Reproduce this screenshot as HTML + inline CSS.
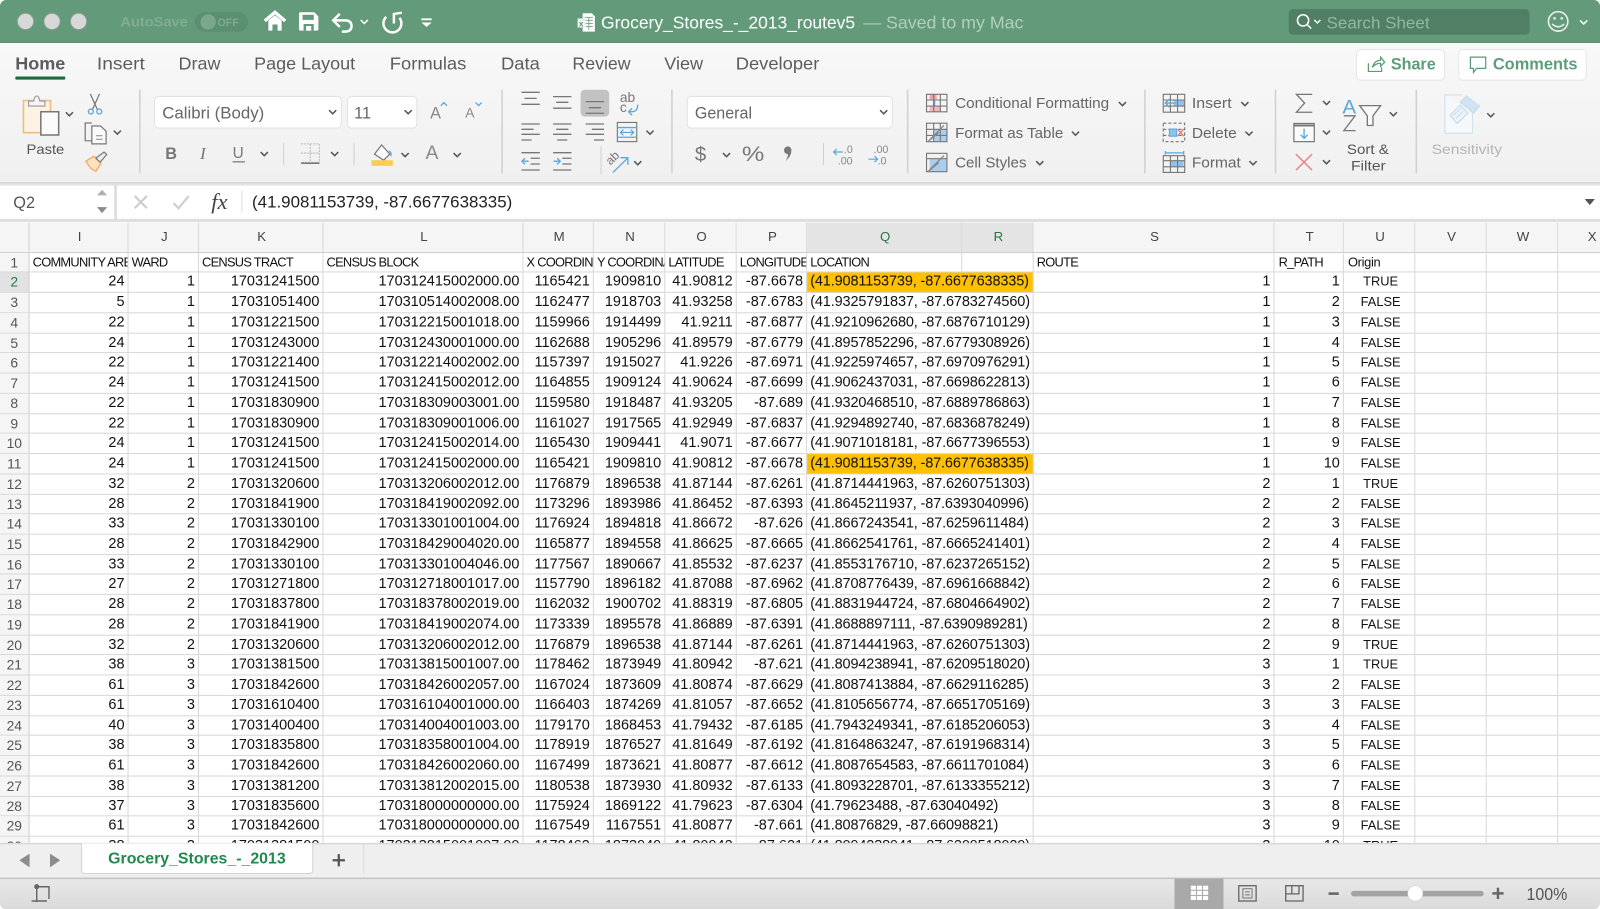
<!DOCTYPE html>
<html><head><meta charset="utf-8"><title>Grocery_Stores_-_2013_routev5</title>
<style>
html,body{margin:0;padding:0;background:#fff;width:1600px;height:909px;overflow:hidden}
#app{position:absolute;left:0;top:0;width:1568px;height:891px;transform:scale(1.020408);transform-origin:0 0;overflow:hidden;font-family:"Liberation Sans",sans-serif;border-radius:6px;background:#fff}
svg{position:absolute;left:0;top:0}
svg text{font-family:"Liberation Sans",sans-serif}
#grid{position:absolute;left:0;top:218px;width:1568px;height:608px;overflow:hidden;background:#fff;color:#111}
.r{display:grid;grid-template-columns:29px 97px 69px 122px 196px 69px 70px 70px 69px 222px 236px 68px 70px 70px 70px 41px;height:19.74px;font-size:14.2px;line-height:19.2px}
.r p{margin:0;padding:0 3px 0 0;border-right:1px solid #d8d8d8;border-bottom:1px solid #d8d8d8;text-align:right;overflow:hidden;white-space:nowrap;box-sizing:border-box;height:19.74px}
.r p:last-child{border-right:0}
.r p:nth-child(1){text-align:center;padding:0;background:#f5f5f5;color:#555;border-right:1px solid #cfcfcf;font-size:13.6px}
.r p:nth-child(10){text-align:left;padding-left:3px;letter-spacing:-.13px}
.r p:nth-child(13){text-align:center;padding:0 0 0 3px;font-size:12.6px}
.y p:nth-child(10){background:#ffc000}
.s p:nth-child(1){background:#e2e2e2;color:#1f7a45}
.h,.o{grid-template-columns:29px 97px 69px 122px 196px 69px 70px 70px 69px 152px 70px 236px 68px 70px 70px 70px 41px}
.h{height:29.7px;font-size:13px;line-height:27.5px;color:#444}
.h p{height:29.7px;text-align:center;padding:0 0 0 2px;background:#f5f5f5;border-bottom:1px solid #cfcfcf}
.h p:nth-child(1){background:#f5f5f5}
.h p:nth-child(10),.h p:nth-child(11){background:#e4e4e4;color:#1f7a45;text-align:center;padding:0 0 0 2px;letter-spacing:0}
.h p:nth-child(13){font-size:13px;padding:0 0 0 2px}
.h p:last-child{text-align:left;padding-left:29px}
.o{font-size:12.6px;letter-spacing:-.72px}
.o p{text-align:left;padding:0 0 0 3px}
.o p:nth-child(1){letter-spacing:0;padding:0}
.o p:nth-child(10){letter-spacing:-.72px}
.o p:nth-child(11){text-align:left;padding-left:3px}
.o p:nth-child(13){text-align:left;padding:0 0 0 4px;font-size:12.6px}
.o p:nth-child(14){padding:0 0 0 4px;text-align:left;letter-spacing:-.3px}
</style></head><body>
<div id="app">
<svg width="1568" height="891" viewBox="0 0 1568 891" xmlns="http://www.w3.org/2000/svg">
<defs>
<path id="ch" d="M-3.5-2L0 1.5 3.5-2" fill="none" stroke="#555" stroke-width="1.5"/>
<linearGradient id="rb" x1="0" y1="0" x2="0" y2="1"><stop offset="0" stop-color="#f8f8f8"/><stop offset="1" stop-color="#f0f0f0"/></linearGradient>
<linearGradient id="st" x1="0" y1="0" x2="0" y2="1"><stop offset="0" stop-color="#e8e8e8"/><stop offset="1" stop-color="#dadada"/></linearGradient>
</defs>
<!-- ribbon bg -->
<rect x="0" y="42" width="1568" height="137" fill="url(#rb)"/>
<rect x="0" y="178.5" width="1568" height="2" fill="#d5d5d5"/>
<!-- title bar -->
<rect x="0" y="0" width="1568" height="42" fill="#629a7a"/>
<rect x="0" y="41" width="1568" height="1" fill="#568a6d"/>
<circle cx="25" cy="21" r="8" fill="#d8d8d8" stroke="#8a9e93"/><circle cx="51" cy="21" r="8" fill="#d8d8d8" stroke="#8a9e93"/><circle cx="77" cy="21" r="8" fill="#d8d8d8" stroke="#8a9e93"/>
<text x="118" y="26" font-size="14" font-weight="bold" fill="#7fae93" textLength="66" lengthAdjust="spacingAndGlyphs">AutoSave</text>
<rect x="191" y="12" width="52" height="19" rx="9.5" fill="#5a8f70"/><circle cx="204" cy="21.5" r="7.5" fill="#7ba78f"/>
<text x="213" y="25.5" font-size="10.5" font-weight="bold" fill="#7eaa92">OFF</text>
<!-- home -->
<path d="M259.500 20.500L269.500 12 279.500 20.500" fill="none" stroke="#fff" stroke-width="3.200"/><path d="M263 20L269.500 15 276 20V30H272V24H267V30H263Z" fill="#fff"/>
<!-- save -->
<path d="M294.500 12H308L312 16V28.500Q312 30 310.500 30H294.500Q293 30 293 28.500V13.500Q293 12 294.500 12Z" fill="#fff"/><rect x="296.500" y="14.500" width="11" height="5" fill="#629a7a"/><rect x="297.500" y="23.500" width="10" height="6.500" fill="#629a7a"/><rect x="300" y="25.500" width="5" height="4.500" fill="#fff"/>
<!-- undo -->
<path d="M333 13.500L326.500 20 333 26.500M326.500 20H338Q344.500 20 344.500 25.500T338 31H335" fill="none" stroke="#fff" stroke-width="2.400"/>
<path d="M353.500 19.500L357 23 360.500 19.500" fill="none" stroke="#fff" stroke-width="1.500"/>
<!-- redo-like -->
<path d="M378.500 16.500A8.800 8.800 0 1 0 391.500 17.500" fill="none" stroke="#fff" stroke-width="2.400"/><path d="M393.800 12.400L386 13.700V23" fill="none" stroke="#fff" stroke-width="2.400"/>
<!-- customize -->
<rect x="413" y="18" width="10" height="1.800" fill="#fff"/><path d="M413 22H423L418 26.500Z" fill="#fff"/>
<!-- title -->
<path d="M571 13H580L583 16V31H571Z" fill="#fff"/><path d="M573 17H581M573 20H581M573 23H581M573 26H581M577 17V29" stroke="#7fae93" stroke-width="1"/><rect x="566" y="18" width="8" height="9" fill="#e9f1ec"/><text x="567.500" y="26" font-size="8" fill="#2b6a47">x</text>
<text x="589" y="28" font-size="17" fill="#fff" textLength="249" lengthAdjust="spacingAndGlyphs">Grocery_Stores_-_2013_routev5</text>
<text x="846" y="28" font-size="17" fill="#b0d0bd" textLength="157" lengthAdjust="spacingAndGlyphs">— Saved to my Mac</text>
<!-- search -->
<rect x="1263" y="9" width="236" height="25" rx="4" fill="#507f65"/>
<circle cx="1277" cy="20" r="5.500" fill="none" stroke="#fff" stroke-width="1.500"/><path d="M1281 24L1285 28" stroke="#fff" stroke-width="1.500"/><path d="M1288 19.500L1291 22.500 1294 19.500" fill="none" stroke="#fff" stroke-width="1.400"/>
<text x="1300" y="28" font-size="16" fill="#93b8a4" textLength="101" lengthAdjust="spacingAndGlyphs">Search Sheet</text>
<circle cx="1527" cy="21" r="9.500" fill="none" stroke="#e8f0eb" stroke-width="1.600"/><circle cx="1523.500" cy="18" r="1.300" fill="#e8f0eb"/><circle cx="1530.500" cy="18" r="1.300" fill="#e8f0eb"/><path d="M1521 23.500Q1527 29 1533 23.500" fill="none" stroke="#e8f0eb" stroke-width="1.500"/><path d="M1548.500 20L1552 23.500 1555.500 20" fill="none" stroke="#fff" stroke-width="1.500"/>
<!-- tabs -->
<g font-size="17" fill="#5c5c5c">
<text x="15" y="68" font-weight="bold" textLength="49" lengthAdjust="spacingAndGlyphs">Home</text>
<text x="95" y="68" textLength="47" lengthAdjust="spacingAndGlyphs">Insert</text>
<text x="175" y="68" textLength="41" lengthAdjust="spacingAndGlyphs">Draw</text>
<text x="249" y="68" textLength="99" lengthAdjust="spacingAndGlyphs">Page Layout</text>
<text x="382" y="68" textLength="75" lengthAdjust="spacingAndGlyphs">Formulas</text>
<text x="491" y="68" textLength="38" lengthAdjust="spacingAndGlyphs">Data</text>
<text x="561" y="68" textLength="57" lengthAdjust="spacingAndGlyphs">Review</text>
<text x="651" y="68" textLength="38" lengthAdjust="spacingAndGlyphs">View</text>
<text x="721" y="68" textLength="82" lengthAdjust="spacingAndGlyphs">Developer</text>
</g>
<rect x="15" y="75" width="49" height="3" rx="1" fill="#1e6b3f"/>
<!-- share / comments -->
<rect x="1329.500" y="48.500" width="86" height="30" rx="4" fill="#fff" stroke="#e6e6e6"/>
<path d="M1341 62V70H1354V66M1345 66Q1347 59 1353 59V56L1357 61 1353 65V62Q1348 62 1345 66Z" fill="none" stroke="#5a9a76" stroke-width="1.200"/>
<text x="1363" y="68" font-size="16" font-weight="bold" fill="#5f9c7a" textLength="44" lengthAdjust="spacingAndGlyphs">Share</text>
<rect x="1429.500" y="48.500" width="125" height="30" rx="4" fill="#fff" stroke="#e6e6e6"/>
<path d="M1441 56H1456V67H1447L1444 71V67H1441Z" fill="none" stroke="#5a9a76" stroke-width="1.200"/>
<text x="1463" y="68" font-size="16" font-weight="bold" fill="#5f9c7a" textLength="83" lengthAdjust="spacingAndGlyphs">Comments</text>
<!-- separators -->
<g stroke="#d0d0d0" stroke-width="1.500"><path d="M137 88V170M492 88V170M658.500 88V170M889.500 88V170M1122 88V170M1250 88V170M1388 88V170"/></g>
<g stroke="#d0d0d0" stroke-width="1"><path d="M278 140V162M347 140V162M589 143V171M807 140V162"/></g>
<!-- clipboard -->
<path d="M23 98.500H49.500V130H23Z" fill="#fdf3e3" stroke="#f2bd7c" stroke-width="1.600"/>
<path d="M28 104V99H33Q34 94 36 94 38 94 39 99H44V104Z" fill="#f4f4f4" stroke="#999" stroke-width="1.100"/>
<rect x="40" y="109.500" width="17.500" height="22.800" fill="#fafafa" stroke="#777" stroke-width="1.500"/>
<use href="#ch" x="68" y="112"/>
<text x="26" y="151" font-size="13.500" fill="#555" textLength="37" lengthAdjust="spacingAndGlyphs">Paste</text>
<path d="M88.500 92L95.500 107.500M97.500 92L90.500 107.500" stroke="#777" stroke-width="1.200"/><circle cx="89" cy="109.300" r="2.400" fill="none" stroke="#5aa7dc" stroke-width="1.300"/><circle cx="97.300" cy="109.300" r="2.400" fill="none" stroke="#5aa7dc" stroke-width="1.300"/>
<path d="M90 120.500H83.500V138H90" fill="none" stroke="#777" stroke-width="1.200"/><path d="M90 123.500H98.500L104 128.500V141H90Z" fill="#fafafa" stroke="#777" stroke-width="1.200"/><path d="M94 133H100.500M94 136.500H100.500" stroke="#888"/>
<use href="#ch" x="115" y="130"/>
<path d="M84 158L92 153 99 160 94 168 89 165Z" fill="#fde1bd" stroke="#f0a860" stroke-width="1.200"/><path d="M94 155L102 149 104.500 151.500 98 159Z" fill="#eee" stroke="#777" stroke-width="1.200"/>
<!-- font -->
<rect x="151.500" y="94.500" width="183" height="31" rx="4" fill="#fff" stroke="#e2e2e2"/>
<text x="159" y="116" font-size="16" fill="#666" textLength="100" lengthAdjust="spacingAndGlyphs">Calibri (Body)</text><use href="#ch" x="326" y="110"/>
<rect x="340.500" y="94.500" width="68" height="31" rx="4" fill="#fff" stroke="#e2e2e2"/>
<text x="347" y="116" font-size="16" fill="#666">11</text><use href="#ch" x="400" y="110"/>
<text x="421.500" y="116" font-size="16" fill="#888">A</text><path d="M432 103.500L435 100.500 438 103.500" fill="none" stroke="#5aa7dc" stroke-width="1.300"/>
<text x="456" y="115" font-size="13.500" fill="#888">A</text><path d="M466 100.500L469 103.500 472 100.500" fill="none" stroke="#5aa7dc" stroke-width="1.300"/>
<text x="162" y="156" font-size="16" font-weight="bold" fill="#777">B</text>
<text x="196" y="156" font-size="17" fill="#777" style="font-family:'Liberation Serif',serif;font-style:italic">I</text>
<text x="228" y="155" font-size="15" fill="#777">U</text><rect x="228" y="158" width="12" height="1.200" fill="#777"/><use href="#ch" x="259" y="151"/>
<path d="M295 141H313V159H295M304 141V159M295 150H313" fill="none" stroke="#bbb" stroke-width="1" stroke-dasharray="2 1"/><path d="M295 160H313" stroke="#777" stroke-width="1.400"/><use href="#ch" x="328" y="151"/>
<path d="M367 151L374 142 382 151 376 157Z" fill="#fafafa" stroke="#777" stroke-width="1.200"/><path d="M381 148Q384 149 383 153" fill="none" stroke="#5aa7dc" stroke-width="1.300"/><rect x="364" y="157" width="21" height="5.500" fill="#f8cd55"/><use href="#ch" x="397" y="152"/>
<text x="417" y="156" font-size="19" fill="#888">A</text><use href="#ch" x="448" y="152"/>
<!-- alignment -->
<g stroke="#777" stroke-width="1.300" fill="none">
<path d="M511 90.500H529M514 96.400H526M511 102.200H529"/>
<path d="M542 94.700H560M545 100.300H557M542 106H560"/>
<path d="M511 121.500H529M511 126.700H523M511 131.600H529M511 137.200H521"/>
<path d="M542 121.500H560M545 126.700H557M542 131.600H560M546 137.200H556"/>
<path d="M574 121.500H592M580 126.700H592M574 131.600H592M582 137.200H592"/>
</g>
<rect x="569" y="88" width="28" height="26.300" rx="4" fill="#c2c2c2"/><path d="M574 99.600H592M577 105.500H589M574 111H592" stroke="#777" stroke-width="1.300"/>
<text x="607.500" y="100" font-size="13.500" fill="#777">ab</text><text x="607.500" y="110" font-size="13.500" fill="#777">c</text><path d="M625 102.500Q625 109.500 619 109.500H616M619.500 106L616 109.500 619.500 113" fill="none" stroke="#5aa7dc" stroke-width="1.300"/>
<rect x="605" y="120" width="19" height="18.800" fill="none" stroke="#777" stroke-width="1.100"/><path d="M605 125H624M605 134.500H624" stroke="#5aa7dc" stroke-width="1.300"/><path d="M608 129.800H621M611 127L608 129.800 611 132.600M618 127L621 129.800 618 132.600" fill="none" stroke="#5aa7dc" stroke-width="1.200"/><use href="#ch" x="637" y="130"/>
<g fill="none" stroke-width="1.300"><path d="M511 149.600H529M520 155.100H529M520 160.700H529M511 166.600H529" stroke="#777"/><path d="M518 158H511.500M514.500 155L511.500 158 514.500 161" stroke="#5aa7dc"/>
<path d="M542 149.600H560M551 155.100H560M551 160.700H560M542 166.600H560" stroke="#777"/><path d="M542.500 158H549M546 155L549 158 546 161" stroke="#5aa7dc"/></g>
<text x="594" y="160" font-size="12" fill="#777" transform="rotate(-45 599 156)">ab</text><path d="M600.700 169L615.300 154.800M608 154.500H615.300V161.500" fill="none" stroke="#5aa7dc" stroke-width="1.300"/><use href="#ch" x="625" y="160"/>
<!-- number -->
<rect x="673.500" y="94.500" width="201" height="31" rx="4" fill="#fff" stroke="#e2e2e2"/>
<text x="681" y="116" font-size="16" fill="#666" textLength="56" lengthAdjust="spacingAndGlyphs">General</text><use href="#ch" x="866" y="110"/>
<text x="681" y="158" font-size="20" fill="#777">$</text><use href="#ch" x="712" y="152"/>
<text x="727" y="158" font-size="21" fill="#777" textLength="22" lengthAdjust="spacingAndGlyphs">%</text>
<path d="M772 143.500a3.600 3.600 0 0 1 3.600 3.800q0 6-6 10.700q2.600-3.500 2.600-7a3.600 3.600 0 0 1-.2-7.500z" fill="#777"/>
<text x="827" y="150" font-size="10.500" fill="#888">.0</text><text x="821" y="161" font-size="10.500" fill="#888">.00</text><path d="M817 149H826M820 146L817 149 820 152" fill="none" stroke="#5aa7dc" stroke-width="1.200"/>
<text x="856" y="150" font-size="10.500" fill="#888">.00</text><text x="860" y="161" font-size="10.500" fill="#888">.0</text><path d="M851 156H860M857 153L860 156 857 159" fill="none" stroke="#5aa7dc" stroke-width="1.200"/>
<!-- styles -->
<path d="M915 127H928V139H915Z" fill="#a8d0ee"/><path d="M911 156H928V168H911Z" fill="#a8d0ee"/>
<rect x="911" y="92.400" width="7" height="5" fill="#f0a3a3"/><rect x="911" y="104.500" width="10" height="5" fill="#f4b5b5"/><path d="M915.500 98V104" stroke="#5aa7dc" stroke-width="2"/>
<g fill="none" stroke="#777" stroke-width="1.100">
<path d="M908 92.400H928V109.600H908ZM908 98H928M908 104H928M915 92.400V109.600M921.500 92.400V109.600"/>
<path d="M908 120.700H928V138.800H908ZM908 126.700H928M908 132.700H928M915 120.700V138.800M921.500 120.700V138.800"/>
<path d="M908 150.200H928V168.200H908ZM908 155.500H928"/>
</g>
<path d="M911 137L925 123M909 139L920 130M911 166.500L925 152.500M909 168.500L920 159.500" stroke="#888" stroke-width="1.300"/>
<g font-size="14.500" fill="#666">
<text x="936" y="106" textLength="151" lengthAdjust="spacingAndGlyphs">Conditional Formatting</text><use href="#ch" x="1100" y="102"/>
<text x="936" y="135" textLength="106" lengthAdjust="spacingAndGlyphs">Format as Table</text><use href="#ch" x="1054" y="131"/>
<text x="936" y="164" textLength="70" lengthAdjust="spacingAndGlyphs">Cell Styles</text><use href="#ch" x="1019" y="160"/>
<text x="1168" y="106" textLength="39" lengthAdjust="spacingAndGlyphs">Insert</text><use href="#ch" x="1220" y="102"/>
<text x="1168" y="135" textLength="44" lengthAdjust="spacingAndGlyphs">Delete</text><use href="#ch" x="1224" y="131"/>
<text x="1168" y="164" textLength="48" lengthAdjust="spacingAndGlyphs">Format</text><use href="#ch" x="1228" y="160"/>
</g>
<!-- cells -->
<rect x="1150" y="98" width="11" height="6" fill="#8fc2ea"/><rect x="1147" y="157.500" width="13" height="6" fill="#8fc2ea"/>
<g fill="none" stroke="#777" stroke-width="1.100">
<path d="M1140 92.400H1161V110H1140ZM1140 98H1161M1140 104H1161M1147 92.400V110M1154 92.400V110"/>
<path d="M1140 120.700H1161V138.800H1140ZM1140 126.700H1161M1140 132.700H1161" stroke-dasharray="3 2"/>
<path d="M1140 152.600H1161V169H1140ZM1140 157.500H1161M1140 163.500H1161M1147 152.600V169M1154 152.600V169"/>
</g>
<path d="M1152 101H1142M1146 97L1142 101 1146 105" fill="none" stroke="#5aa7dc" stroke-width="1.400"/>
<rect x="1146" y="126.500" width="7" height="7" fill="#8fc2ea" stroke="#5aa7dc"/><path d="M1154 126.500L1160 133.500M1160 126.500L1154 133.500" stroke="#e77" stroke-width="1.300"/>
<path d="M1142 149.800H1160M1142 148V151.600M1160 148V151.600" stroke="#5aa7dc" stroke-width="1.200" fill="none"/>
<!-- editing -->
<path d="M1286 92.500H1270.500L1278.500 101 1270.500 110H1286" fill="none" stroke="#777" stroke-width="1.300"/><use href="#ch" x="1300" y="101"/>
<rect x="1268" y="121" width="20" height="17.800" fill="#fbfbfb" stroke="#777" stroke-width="1.200"/><path d="M1268 123H1288" stroke="#777" stroke-width="2"/><path d="M1278 126V135.500M1274.500 132L1278 135.500 1281.500 132" fill="none" stroke="#5aa7dc" stroke-width="1.300"/><use href="#ch" x="1300" y="130"/>
<path d="M1270 151L1285.800 166.700M1285.800 151L1270 166.700" stroke="#ea8080" stroke-width="1.400"/><use href="#ch" x="1300" y="159"/>
<text x="1315.500" y="111" font-size="19" fill="#5aa7dc" textLength="13.500" lengthAdjust="spacingAndGlyphs">A</text>
<path d="M1317 113.500H1328L1317 128H1328.500" fill="none" stroke="#777" stroke-width="1.300"/>
<text x="1315.500" y="128" font-size="1" fill="#777"> </text>
<path d="M1332.500 103.500H1353L1345.500 113.500V123H1340V113.500Z" fill="#fafafa" stroke="#777" stroke-width="1.300"/><use href="#ch" x="1365.500" y="112"/>
<text x="1320" y="151" font-size="13.500" fill="#555" textLength="41" lengthAdjust="spacingAndGlyphs">Sort &amp;</text>
<text x="1324" y="167" font-size="13.500" fill="#555" textLength="34" lengthAdjust="spacingAndGlyphs">Filter</text>
<!-- sensitivity -->
<path d="M1416 93H1433M1443 110V130.600H1416V93" fill="#f6f9fb" stroke="#cfe2f0" stroke-width="1.200"/>
<path d="M1421 113L1431 103 1438.500 111 1428 121Z" fill="#eef3f8" stroke="#c5dcec" stroke-width="1.200"/><path d="M1424 113L1432 106M1427 116L1434 109" stroke="#c5dcec"/>
<path d="M1431 100L1437 94 1450 104 1444 111Z" fill="#cfe3f2" stroke="#c5dcec"/>
<use href="#ch" x="1461" y="113"/>
<text x="1403" y="151" font-size="13.500" fill="#b4b4b4" textLength="69" lengthAdjust="spacingAndGlyphs">Sensitivity</text>
<!-- formula bar -->
<rect x="0" y="180" width="1568" height="38" fill="#fff"/>
<rect x="0" y="180" width="1568" height="2" fill="#e4e4e4"/>
<rect x="112" y="181" width="2.500" height="34" fill="#dcdcdc"/>
<rect x="0" y="214.500" width="1568" height="3" fill="#dedede"/>
<text x="13" y="204" font-size="16" fill="#555">Q2</text>
<path d="M100 186L105 191.500H95Z" fill="#b0b0b0"/><path d="M100 209L105 203H95Z" fill="#8c8c8c"/>
<path d="M132 192L144 204M144 192L132 204" stroke="#cfcfcf" stroke-width="2.200"/>
<path d="M170 199L175 204 185 192" fill="none" stroke="#cfcfcf" stroke-width="2.200"/>
<text x="207" y="205" font-size="22" fill="#444" style="font-family:'Liberation Serif',serif;font-style:italic">fx</text>
<path d="M237 187V208" stroke="#ddd"/>
<text x="247" y="203.500" font-size="16" fill="#222" textLength="255" lengthAdjust="spacingAndGlyphs">(41.9081153739, -87.6677638335)</text>
<path d="M1553 195H1563L1558 201Z" fill="#555"/>
<!-- tab bar -->
<rect x="0" y="826" width="1568" height="35" fill="#efefef"/>
<rect x="0" y="825" width="1568" height="2.500" fill="#d8d8d8"/>
<path d="M19 843L29 836.500V850Z" fill="#8c8c8c"/><path d="M59 843L49 836.500V850Z" fill="#8c8c8c"/>
<path d="M80 826H306.500V853Q306.500 856 303 856H83Q80 856 80 853Z" fill="#fff" stroke="#d4d4d4"/>
<text x="106" y="846" font-size="15" font-weight="bold" fill="#22894e" textLength="174" lengthAdjust="spacingAndGlyphs">Grocery_Stores_-_2013</text>
<path d="M332 837V849M326 843H338" stroke="#555" stroke-width="2.200"/>
<path d="M356.500 827V856" stroke="#d8d8d8"/>
<!-- status -->
<rect x="0" y="861" width="1568" height="30" fill="url(#st)"/>
<rect x="0" y="860" width="1568" height="1.500" fill="#c4c4c4"/>
<circle cx="36" cy="869" r="2.500" fill="#666"/><path d="M36 869V884M31 883H46M38 869H48V881" fill="none" stroke="#666" stroke-width="1.400"/>
<rect x="1151" y="861" width="48" height="30" fill="#a9a9a9"/>
<g fill="#fff"><rect x="1167" y="868" width="5" height="4"/><rect x="1173" y="868" width="5" height="4"/><rect x="1179" y="868" width="5" height="4"/><rect x="1167" y="873" width="5" height="4"/><rect x="1173" y="873" width="5" height="4"/><rect x="1179" y="873" width="5" height="4"/><rect x="1167" y="878" width="5" height="4"/><rect x="1173" y="878" width="5" height="4"/><rect x="1179" y="878" width="5" height="4"/></g>
<rect x="1214" y="868" width="17" height="15" fill="none" stroke="#666" stroke-width="1.300"/><path d="M1218 871H1227V880H1218ZM1220 874H1225M1220 877H1225" fill="none" stroke="#777" stroke-width="1"/>
<path d="M1260 868H1277V883H1260ZM1260 876H1273V868M1266 868V876" fill="none" stroke="#666" stroke-width="1.300"/>
<rect x="1302" y="874.500" width="10" height="2.500" fill="#666"/>
<rect x="1324" y="873" width="130" height="5.500" rx="2.700" fill="#a3a3a3"/>
<circle cx="1387" cy="875.500" r="7.500" fill="#fff" stroke="#ccc" stroke-width=".5"/>
<path d="M1468 870V881M1462.500 875.500H1473.500" stroke="#666" stroke-width="2.400"/>
<text x="1496" y="882" font-size="17" fill="#555" textLength="40" lengthAdjust="spacingAndGlyphs">100%</text>
</svg>
<div id="grid">
<div class="r h"><p><p>I<p>J<p>K<p>L<p>M<p>N<p>O<p>P<p>Q<p>R<p>S<p>T<p>U<p>V<p>W<p>X</div>
<div class="r o"><p>1<p>COMMUNITY AREA<p>WARD<p>CENSUS TRACT<p>CENSUS BLOCK<p>X COORDINATE<p>Y COORDINATE<p>LATITUDE<p>LONGITUDE<p>LOCATION<p><p>ROUTE<p>R_PATH<p>Origin<p><p><p></div>
<div class="r y s"><p>2<p>24<p>1<p>17031241500<p>170312415002000.00<p>1165421<p>1909810<p>41.90812<p>-87.6678<p>(41.9081153739, -87.6677638335)<p>1<p>1<p>TRUE<p><p><p></div>
<div class="r"><p>3<p>5<p>1<p>17031051400<p>170310514002008.00<p>1162477<p>1918703<p>41.93258<p>-87.6783<p>(41.9325791837, -87.6783274560)<p>1<p>2<p>FALSE<p><p><p></div>
<div class="r"><p>4<p>22<p>1<p>17031221500<p>170312215001018.00<p>1159966<p>1914499<p>41.9211<p>-87.6877<p>(41.9210962680, -87.6876710129)<p>1<p>3<p>FALSE<p><p><p></div>
<div class="r"><p>5<p>24<p>1<p>17031243000<p>170312430001000.00<p>1162688<p>1905296<p>41.89579<p>-87.6779<p>(41.8957852296, -87.6779308926)<p>1<p>4<p>FALSE<p><p><p></div>
<div class="r"><p>6<p>22<p>1<p>17031221400<p>170312214002002.00<p>1157397<p>1915027<p>41.9226<p>-87.6971<p>(41.9225974657, -87.6970976291)<p>1<p>5<p>FALSE<p><p><p></div>
<div class="r"><p>7<p>24<p>1<p>17031241500<p>170312415002012.00<p>1164855<p>1909124<p>41.90624<p>-87.6699<p>(41.9062437031, -87.6698622813)<p>1<p>6<p>FALSE<p><p><p></div>
<div class="r"><p>8<p>22<p>1<p>17031830900<p>170318309003001.00<p>1159580<p>1918487<p>41.93205<p>-87.689<p>(41.9320468510, -87.6889786863)<p>1<p>7<p>FALSE<p><p><p></div>
<div class="r"><p>9<p>22<p>1<p>17031830900<p>170318309001006.00<p>1161027<p>1917565<p>41.92949<p>-87.6837<p>(41.9294892740, -87.6836878249)<p>1<p>8<p>FALSE<p><p><p></div>
<div class="r"><p>10<p>24<p>1<p>17031241500<p>170312415002014.00<p>1165430<p>1909441<p>41.9071<p>-87.6677<p>(41.9071018181, -87.6677396553)<p>1<p>9<p>FALSE<p><p><p></div>
<div class="r y"><p>11<p>24<p>1<p>17031241500<p>170312415002000.00<p>1165421<p>1909810<p>41.90812<p>-87.6678<p>(41.9081153739, -87.6677638335)<p>1<p>10<p>FALSE<p><p><p></div>
<div class="r"><p>12<p>32<p>2<p>17031320600<p>170313206002012.00<p>1176879<p>1896538<p>41.87144<p>-87.6261<p>(41.8714441963, -87.6260751303)<p>2<p>1<p>TRUE<p><p><p></div>
<div class="r"><p>13<p>28<p>2<p>17031841900<p>170318419002092.00<p>1173296<p>1893986<p>41.86452<p>-87.6393<p>(41.8645211937, -87.6393040996)<p>2<p>2<p>FALSE<p><p><p></div>
<div class="r"><p>14<p>33<p>2<p>17031330100<p>170313301001004.00<p>1176924<p>1894818<p>41.86672<p>-87.626<p>(41.8667243541, -87.6259611484)<p>2<p>3<p>FALSE<p><p><p></div>
<div class="r"><p>15<p>28<p>2<p>17031842900<p>170318429004020.00<p>1165877<p>1894558<p>41.86625<p>-87.6665<p>(41.8662541761, -87.6665241401)<p>2<p>4<p>FALSE<p><p><p></div>
<div class="r"><p>16<p>33<p>2<p>17031330100<p>170313301004046.00<p>1177567<p>1890667<p>41.85532<p>-87.6237<p>(41.8553176710, -87.6237265152)<p>2<p>5<p>FALSE<p><p><p></div>
<div class="r"><p>17<p>27<p>2<p>17031271800<p>170312718001017.00<p>1157790<p>1896182<p>41.87088<p>-87.6962<p>(41.8708776439, -87.6961668842)<p>2<p>6<p>FALSE<p><p><p></div>
<div class="r"><p>18<p>28<p>2<p>17031837800<p>170318378002019.00<p>1162032<p>1900702<p>41.88319<p>-87.6805<p>(41.8831944724, -87.6804664902)<p>2<p>7<p>FALSE<p><p><p></div>
<div class="r"><p>19<p>28<p>2<p>17031841900<p>170318419002074.00<p>1173339<p>1895578<p>41.86889<p>-87.6391<p>(41.8688897111, -87.6390989281)<p>2<p>8<p>FALSE<p><p><p></div>
<div class="r"><p>20<p>32<p>2<p>17031320600<p>170313206002012.00<p>1176879<p>1896538<p>41.87144<p>-87.6261<p>(41.8714441963, -87.6260751303)<p>2<p>9<p>TRUE<p><p><p></div>
<div class="r"><p>21<p>38<p>3<p>17031381500<p>170313815001007.00<p>1178462<p>1873949<p>41.80942<p>-87.621<p>(41.8094238941, -87.6209518020)<p>3<p>1<p>TRUE<p><p><p></div>
<div class="r"><p>22<p>61<p>3<p>17031842600<p>170318426002057.00<p>1167024<p>1873609<p>41.80874<p>-87.6629<p>(41.8087413884, -87.6629116285)<p>3<p>2<p>FALSE<p><p><p></div>
<div class="r"><p>23<p>61<p>3<p>17031610400<p>170316104001000.00<p>1166403<p>1874269<p>41.81057<p>-87.6652<p>(41.8105656774, -87.6651705169)<p>3<p>3<p>FALSE<p><p><p></div>
<div class="r"><p>24<p>40<p>3<p>17031400400<p>170314004001003.00<p>1179170<p>1868453<p>41.79432<p>-87.6185<p>(41.7943249341, -87.6185206053)<p>3<p>4<p>FALSE<p><p><p></div>
<div class="r"><p>25<p>38<p>3<p>17031835800<p>170318358001004.00<p>1178919<p>1876527<p>41.81649<p>-87.6192<p>(41.8164863247, -87.6191968314)<p>3<p>5<p>FALSE<p><p><p></div>
<div class="r"><p>26<p>61<p>3<p>17031842600<p>170318426002060.00<p>1167499<p>1873621<p>41.80877<p>-87.6612<p>(41.8087654583, -87.6611701084)<p>3<p>6<p>FALSE<p><p><p></div>
<div class="r"><p>27<p>38<p>3<p>17031381200<p>170313812002015.00<p>1180538<p>1873930<p>41.80932<p>-87.6133<p>(41.8093228701, -87.6133355212)<p>3<p>7<p>FALSE<p><p><p></div>
<div class="r"><p>28<p>37<p>3<p>17031835600<p>170318000000000.00<p>1175924<p>1869122<p>41.79623<p>-87.6304<p>(41.79623488, -87.63040492)<p>3<p>8<p>FALSE<p><p><p></div>
<div class="r"><p>29<p>61<p>3<p>17031842600<p>170318000000000.00<p>1167549<p>1167551<p>41.80877<p>-87.661<p>(41.80876829, -87.66098821)<p>3<p>9<p>FALSE<p><p><p></div>
<div class="r"><p>30<p>38<p>3<p>17031381500<p>170313815001007.00<p>1178462<p>1873949<p>41.80942<p>-87.621<p>(41.8094238941, -87.6209518020)<p>3<p>10<p>TRUE<p><p><p></div>
</div>
</div>
</body></html>
